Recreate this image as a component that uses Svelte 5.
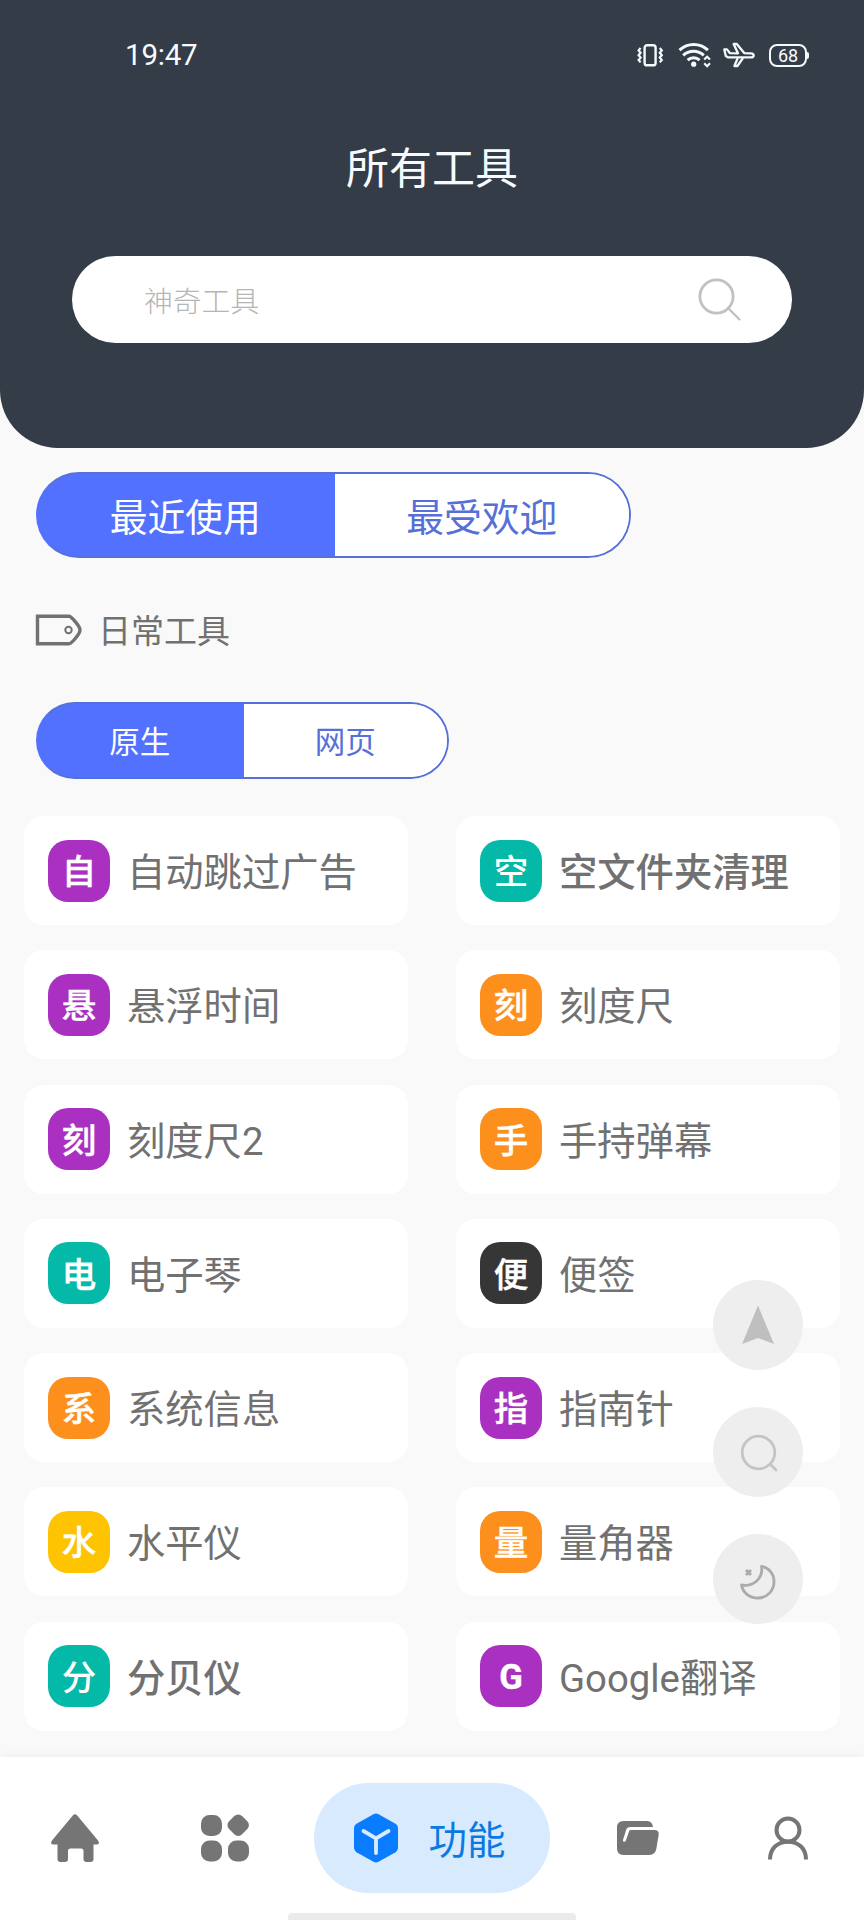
<script>
  const tools = [
    { icon: "自", name: "自动跳过广告", color: "#a930c0" },
    { icon: "空", name: "空文件夹清理", color: "#04b9a7", medium: true },
    { icon: "悬", name: "悬浮时间", color: "#a930c0" },
    { icon: "刻", name: "刻度尺", color: "#fd8f1c" },
    { icon: "刻", name: "刻度尺2", color: "#a930c0" },
    { icon: "手", name: "手持弹幕", color: "#fd8f1c" },
    { icon: "电", name: "电子琴", color: "#04b9a7" },
    { icon: "便", name: "便签", color: "#363636" },
    { icon: "系", name: "系统信息", color: "#fd8f1c" },
    { icon: "指", name: "指南针", color: "#a930c0" },
    { icon: "水", name: "水平仪", color: "#fec301" },
    { icon: "量", name: "量角器", color: "#fd8f1c" },
    { icon: "分", name: "分贝仪", color: "#04b9a7", medium: true },
    { icon: "G", name: "Google翻译", color: "#a930c0", latin: true },
  ];

  let sort = $state("最近使用");
  let kind = $state("原生");
</script>

<div class="page">
  <header class="header">
    <div class="status">
      <span class="time">19:47</span>
      <div class="signals">
        <svg width="27" height="26" viewBox="0 0 27 26" fill="none" stroke="#f4fafc">
          <rect x="7.6" y="3.3" width="11" height="20" rx="2.4" stroke-width="2.4" />
          <path d="M3.6 6 1.6 8.4 3.6 10.8 1.6 13.2 3.6 15.6 1.6 18 3.6 20.4M22.8 6l2 2.4-2 2.4 2 2.4-2 2.4 2 2.4-2 2.4" stroke-width="2.2" />
        </svg>
        <svg width="35" height="26" viewBox="0 0 35 26" fill="none" stroke="#f4fafc" stroke-width="3">
          <path d="M3.5 8.2a20.5 20.5 0 0 1 28.4 0M7.2 13.4a15 15 0 0 1 20.6 0" />
          <path d="M11.6 18.2a9 9 0 0 1 12-.1" />
          <circle cx="17.7" cy="22.2" r="2.6" fill="#f4fafc" stroke="none" />
          <path d="m28.2 17.6 2.9-2.9 2.9 2.9M28.2 21.3l2.9 2.9 2.9-2.9" stroke-width="2.1" />
        </svg>
        <svg width="34" height="26" viewBox="0 0 34 26" fill="none" stroke="#f4fafc" stroke-width="2.3" stroke-linejoin="round">
          <path d="M1.3 7.4 4 7.4l3 3.8 8 .1L10.6 2h3.2l7.4 9.1 6.6.3c2 .2 2.9 1.2 2.9 2s-.9 1.9-2.9 2H5.2L2.8 14Z" />
          <path d="M14.8 16 11.4 24h3L20 16" />
        </svg>
        <div class="battery">68</div>
      </div>
    </div>
    <h1>所有工具</h1>
    <div class="search">
      <span>神奇工具</span>
      <svg width="46" height="46" viewBox="0 0 46 46" fill="none" stroke="#c1c1c1" stroke-width="2.8" stroke-linecap="round">
        <circle cx="19.5" cy="19.5" r="16.6" />
        <path d="m31.5 31.5 11 11" stroke-width="2.4" />
      </svg>
    </div>
  </header>

  <main>
    <div class="tabs large">
      {#each ["最近使用", "最受欢迎"] as tab}
        <button class:active={sort === tab} onclick={() => (sort = tab)}>{tab}</button>
      {/each}
    </div>

    <h2>
      <svg width="46" height="32" viewBox="0 0 46 32" fill="none" stroke="#717171">
        <path d="M1.5 2.2H33c2.5 0 10 9.5 10.8 12.5.3 1 .3 1.7 0 2.6C43 20.5 35.5 29.8 33 29.8H1.5Z" stroke-width="3.4" />
        <circle cx="32.5" cy="16" r="3.2" stroke-width="2" />
      </svg>
      <span>日常工具</span>
    </h2>

    <div class="tabs small">
      {#each ["原生", "网页"] as tab}
        <button class:active={kind === tab} onclick={() => (kind = tab)}>{tab}</button>
      {/each}
    </div>

    <div class="tools">
      {#each tools as tool}
        <div class="tool" class:medium={tool.medium}>
          <span class="icon" class:latin={tool.latin} style="background: {tool.color}">{tool.icon}</span>
          <span class="name">{tool.name}</span>
        </div>
      {/each}
    </div>
  </main>

  <nav>
    <svg width="48" height="48" viewBox="0 0 48 48" fill="#757575">
      <path d="M22 1.2Q24-.8 26 1.2L47 26.5Q49.5 30.2 45.5 30.5H42.5V45q0 3-3 3H35.5q-3 0-3-3V37q0-2.5-2.5-2.5H19.5Q17 34.5 17 37v8q0 3-3 3H9.5q-3 0-3-3V30.5H2.5Q-1.5 30.2 1 26.5Z" />
    </svg>
    <svg width="48" height="48" viewBox="0 0 48 48" fill="#757575">
      <rect x="0" y="1" width="21" height="21" rx="8.5" />
      <rect x="0" y="26.5" width="21" height="21" rx="8.5" />
      <rect x="27" y="26.5" width="21" height="21" rx="8.5" />
      <rect x="28" y="2" width="18.4" height="18.4" rx="5.5" transform="rotate(45 37.2 11.2)" />
    </svg>
    <div class="current">
      <svg width="44" height="50" viewBox="0 0 44 50">
        <path d="M19.5 1.2q2.5-1.4 5 0l17 9.6q2.5 1.5 2.5 4.3v19.8q0 2.8-2.5 4.3l-17 9.6q-2.5 1.4-5 0l-17-9.6Q0 37.7 0 34.9V15.1q0-2.8 2.5-4.3Z" fill="#0a7cff" />
        <path d="M9.5 18 22 25.3 34.5 18M22 25.3V40" fill="none" stroke="#d9ebfe" stroke-width="3.8" stroke-linecap="round" stroke-linejoin="round" />
      </svg>
      <span>功能</span>
    </div>
    <svg class="side" width="42" height="34" viewBox="0 0 42 34" fill="#757575">
      <path d="M6.5 0H30q5.2 0 6 6H13.5q-3.5 0-4.5 3.2L6 19q-.4 1.6 1 1.8 1.3.2 1.9-1.3L12.2 10q.4-1 1.8-1h23.5q4.6 0 4.2 4.6l-2.3 14q-1 6.4-7 6.4H6.5Q0 34 0 27.5v-21Q0 0 6.5 0Z" />
    </svg>
    <svg class="side" width="42" height="44" viewBox="0 0 42 44" fill="none" stroke="#757575" stroke-width="4">
      <circle cx="21" cy="14" r="11.5" />
      <path d="M3 43.5C3 32 11 25.7 21 25.7S39 32 39 43.5" />
    </svg>
    <div class="homebar"></div>
  </nav>

  <div class="floating">
    <button aria-label="top">
      <svg width="34" height="40" viewBox="0 0 34 40" fill="#bfbfbf">
        <path d="M17 .5 33 39 17 33 1 39Z" />
      </svg>
    </button>
    <button aria-label="search">
      <svg width="38" height="38" viewBox="0 0 38 38" fill="none" stroke="#c4c4c4" stroke-width="2.8" stroke-linecap="round">
        <circle cx="19.5" cy="19.5" r="16.3" />
        <path d="m32 32 5 5" />
      </svg>
    </button>
    <button aria-label="night">
      <svg class="moon" width="36" height="36" viewBox="0 0 36 36" fill="none" stroke="#ababab" stroke-width="2.8" stroke-linejoin="round">
        <path d="M21.5 2.3C29 3.5 34 10 34 17.5A16 16 0 0 1 18 34C9.5 34 2.5 28.5 1.6 21c11.5 2 22-6.5 19.9-18.7Z" />
        <path d="m6 6 5 5m0-5-5 5" />
      </svg>
    </button>
  </div>
</div>

<style>
  :global(body) {
    margin: 0;
    background: #f9f9fa;
  }

  .page {
    position: relative;
    display: flex;
    flex-direction: column;
    width: 864px;
    height: 1920px;
    overflow: hidden;
    background: #f9f9fa;
    color: #717171;
    font-family: Roboto, "Noto Sans CJK SC", sans-serif;
  }

  button {
    padding: 0;
    border: none;
    font: inherit;
  }

  svg {
    display: block;
    flex: none;
    overflow: visible;
  }

  .header {
    box-sizing: border-box;
    height: 448px;
    padding: 35px 72px 0;
    border-radius: 0 0 58px 58px;
    background: #343c47;
    color: #f7fbff;
  }

  .status {
    display: flex;
    justify-content: space-between;
    align-items: center;
    height: 40px;
    margin: 0 -17px 0 53px;
  }

  .time {
    font-size: 29.5px;
    letter-spacing: -0.2px;
  }

  .signals {
    display: flex;
    align-items: center;
    gap: 12px;
  }

  .battery {
    position: relative;
    box-sizing: border-box;
    width: 38px;
    height: 23px;
    margin-right: 2px;
    border: 2px solid #f4fafc;
    border-radius: 8px;
    font-size: 18px;
    line-height: 20px;
    text-align: center;
  }

  .battery::after {
    content: "";
    position: absolute;
    top: 6px;
    right: -4px;
    width: 2px;
    height: 7px;
    border-radius: 0 2px 2px 0;
    background: #f4fafc;
  }

  h1 {
    margin: 64px 0 0;
    font-size: 43px;
    font-weight: 400;
    line-height: 60px;
    text-align: center;
  }

  .search {
    display: flex;
    justify-content: space-between;
    align-items: center;
    height: 87px;
    margin-top: 57px;
    padding: 0 49px 0 72px;
    border-radius: 44px;
    background: #fff;
    color: #b5b5b5;
    font-size: 28.8px;
    font-weight: 300;
  }

  main {
    flex: 1;
    padding: 24px 24px 0;
  }

  .tabs {
    display: flex;
    box-sizing: border-box;
    margin-left: 12px;
    overflow: hidden;
    border: 2px solid #5670d8;
    background: #fff;
  }

  .tabs button {
    flex: 1;
    padding: 0 0 2px;
    background: #fff;
    color: #5670d8;
  }

  .tabs button:first-child {
    padding-right: 2px;
  }

  .tabs button.active {
    background: #5271ff;
    color: #fff;
  }

  .tabs:has(button.active:first-child) {
    border-left-color: #5271ff;
    background: linear-gradient(90deg, #5271ff 50%, #fff 50%) border-box;
  }

  .large {
    width: 595px;
    height: 86px;
    border-radius: 43px;
    font-size: 37.8px;
  }

  .small {
    width: 413px;
    height: 77px;
    border-radius: 39px;
    font-size: 30.5px;
  }

  h2 {
    display: flex;
    align-items: center;
    gap: 16px;
    height: 44px;
    margin: 50px 0 50px 12px;
    font-size: 33px;
    font-weight: 400;
  }

  h2 span {
    padding-bottom: 2px;
  }

  .tools {
    display: grid;
    grid-template-columns: 384px 384px;
    grid-auto-rows: 109px;
    gap: 25.3px 48px;
    margin-top: 37px;
  }

  .tool {
    display: flex;
    align-items: center;
    gap: 17px;
    padding-left: 24px;
    border-radius: 20px;
    background: #fff;
  }

  .icon {
    display: flex;
    flex: none;
    justify-content: center;
    align-items: center;
    box-sizing: border-box;
    width: 62px;
    height: 62px;
    padding-bottom: 3px;
    border-radius: 20px;
    color: #fff;
    font-size: 34.5px;
    font-weight: 500;
    -webkit-text-stroke: 0.4px #fff;
  }

  .icon.latin {
    padding: 2px 0 0;
    font-weight: 700;
  }

  .name {
    padding-bottom: 2px;
    font-size: 38.3px;
    white-space: nowrap;
  }

  .medium .icon {
    -webkit-text-stroke: 0;
  }

  .medium .name {
    font-weight: 500;
  }

  nav {
    position: relative;
    display: grid;
    grid-template-columns: 150px 150px 1fr 150px 150px;
    place-items: center;
    box-sizing: border-box;
    height: 163px;
    padding-bottom: 1px;
    box-shadow: 0 -2px 8px rgba(0, 0, 0, 0.04);
    background: #fff;
  }

  .current {
    display: flex;
    align-items: center;
    gap: 31px;
    box-sizing: border-box;
    width: 236px;
    height: 110px;
    margin-right: 1px;
    padding-left: 40px;
    border-radius: 55px;
    background: #d8eafe;
    color: #0b79e3;
    font-size: 38.4px;
  }

  .current span {
    padding-bottom: 3px;
  }

  .side {
    margin-right: 3px;
  }

  .homebar {
    position: absolute;
    bottom: 0;
    left: 288px;
    width: 288px;
    height: 7px;
    border-radius: 4px 4px 0 0;
    background: #ebebeb;
  }

  .floating {
    position: absolute;
    top: 1280px;
    right: 61px;
    display: flex;
    flex-direction: column;
    gap: 37px;
  }

  .floating button {
    display: flex;
    justify-content: center;
    align-items: center;
    width: 90px;
    height: 90px;
    border-radius: 50%;
    background: #eee;
  }

  .floating .moon {
    margin-top: 5px;
  }
</style>
